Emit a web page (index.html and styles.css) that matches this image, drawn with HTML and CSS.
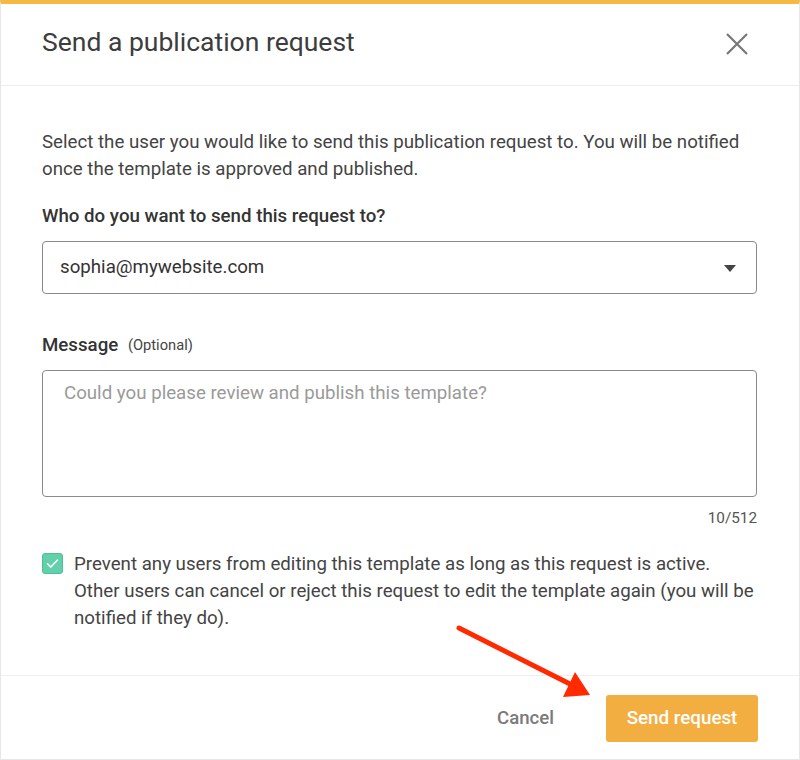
FILE: index.html
```html
<!DOCTYPE html>
<html lang="en">
<head>
<meta charset="utf-8">
<title>Send a publication request</title>
<link rel="stylesheet" href="styles.css">
</head>
<body>
<div class="dialog">
  <header class="dialog-header">
    <h1 class="dialog-title">Send a publication request</h1>
    <button class="close-btn" aria-label="Close">
      <svg width="22" height="22" viewBox="0 0 22 22"><path d="M1 1 L21 21 M21 1 L1 21" stroke="#777" stroke-width="2.2" fill="none"/></svg>
    </button>
  </header>
  <section class="dialog-body">
    <p class="intro">Select the user you would like to send this publication request to. You will be notified once the template is approved and published.</p>
    <div class="field-label">Who do you want to send this request to?</div>
    <div class="select">
      <span class="select-value">sophia@mywebsite.com</span>
      <svg class="caret" width="12" height="7" viewBox="0 0 12 7"><path d="M0 0 H12 L6 7 Z" fill="#444"/></svg>
    </div>
    <div class="field-label message-label">Message <span class="optional">(Optional)</span></div>
    <div class="textarea"><span class="placeholder">Could you please review and publish this template?</span></div>
    <div class="counter">10/512</div>
    <div class="check-row">
      <span class="checkbox">
        <svg width="21" height="21" viewBox="0 0 21 21"><path d="M5.5 10.8 L8.8 14 L15.5 7" stroke="#fff" stroke-width="1.6" fill="none" stroke-linecap="round" stroke-linejoin="round"/></svg>
      </span>
      <span class="check-text">Prevent any users from editing this template as long as this request is active. Other users can cancel or reject this request to edit the template again (you will be notified if they do).</span>
    </div>
  </section>
  <footer class="dialog-footer">
    <button class="btn-cancel">Cancel</button>
    <button class="btn-send">Send request</button>
  </footer>
  <svg class="arrow" width="800" height="760" viewBox="0 0 800 760">
    <line x1="459" y1="628" x2="574" y2="686" stroke="#ff2a00" stroke-width="5" stroke-linecap="round"/>
    <polygon points="590,695 575,672 563,697" fill="#ff2a00"/>
  </svg>
</div>
</body>
</html>
```
FILE: styles.css
```css
* { box-sizing: border-box; }
html, body { margin: 0; padding: 0; background: #fff; }
body { font-family: Roboto, "Noto Sans", Arial, sans-serif; color: #444; }

.dialog {
  position: relative;
  width: 800px;
  height: 760px;
  border: 1px solid #e6e6e6;
  border-top: 4px solid #f6b944;
  display: flex;
  flex-direction: column;
  background: #fff;
}

.dialog-header {
  height: 82px;
  flex: none;
  display: flex;
  align-items: center;
  justify-content: space-between;
  padding: 0 51px 0 41px;
  border-bottom: 1px solid #eeeeee;
}
.dialog-title {
  margin: 0 0 6px 0;
  font-size: 26.5px;
  font-weight: 400;
  color: #3d3d3d;
}
.close-btn {
  background: none;
  border: 0;
  padding: 0;
  width: 22px;
  height: 22px;
  display: flex;
  margin-bottom: 1px;
  cursor: pointer;
}

.dialog-body {
  flex: 1;
  padding: 43px 42px 0 41px;
  font-size: 18.7px;
  line-height: 27px;
}
.intro { margin: 0; color: #444; }
.field-label {
  margin-top: 20px;
  font-weight: 500;
  color: #333;
}
.select {
  margin-top: 11px;
  height: 53px;
  border: 1px solid #8a8a8a;
  border-radius: 4px;
  display: flex;
  align-items: center;
  justify-content: space-between;
  padding: 0 20px 0 17px;
  color: #333;
}
.caret { display: block; margin-top: 2px; }
.message-label { margin-top: 38px; }
.optional {
  font-size: 14.7px;
  font-weight: 400;
  color: #444;
  margin-left: 5px;
  vertical-align: 1px;
}
.textarea {
  margin-top: 11px;
  height: 127px;
  border: 1px solid #8a8a8a;
  border-radius: 4px;
  padding: 9px 21px;
}
.placeholder { color: #9a9a9a; }
.counter {
  margin-top: 11px;
  text-align: right;
  font-size: 15.3px;
  line-height: 20px;
  color: #555;
}
.check-row {
  margin-top: 23px;
  display: flex;
  gap: 11px;
  align-items: flex-start;
}
.checkbox {
  flex: none;
  width: 21px;
  height: 21px;
  margin-top: 2px;
  border-radius: 3px;
  background: #62d0a9;
  border: 1px solid #4fbf98;
  display: flex;
  align-items: center;
  justify-content: center;
}
.checkbox svg { display: block; margin: -1px; }
.check-text { color: #444; }

.dialog-footer {
  flex: none;
  height: 84px;
  border-top: 1px solid #eeeeee;
  display: flex;
  align-items: center;
  justify-content: flex-end;
  padding: 1px 41px 0 41px;
  gap: 52px;
}
.btn-cancel {
  background: none;
  border: 0;
  padding: 0;
  font-family: inherit;
  font-size: 18.6px;
  font-weight: 500;
  color: #7a7a7a;
  cursor: pointer;
}
.btn-send {
  width: 152px;
  height: 47px;
  border: 0;
  border-radius: 3px;
  background: #f3ae41;
  color: #fff;
  font-family: inherit;
  font-size: 18.8px;
  font-weight: 500;
  cursor: pointer;
}

.arrow {
  position: absolute;
  left: -1px;
  top: -4px;
  pointer-events: none;
}
```
